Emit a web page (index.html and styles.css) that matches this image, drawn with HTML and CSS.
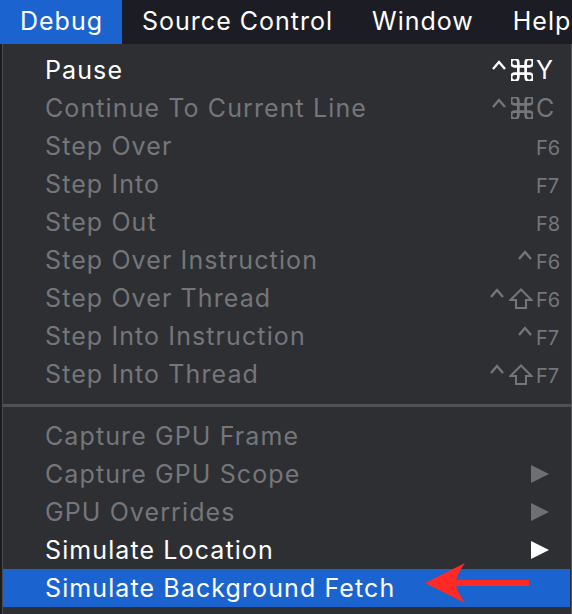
FILE: index.html
```html
<!DOCTYPE html>
<html>
<head>
<meta charset="utf-8">
<link rel="stylesheet" href="styles.css">
</head>
<body>
<div class="menubar">
  <div class="mb-item active">Debug</div>
  <div class="mb-item">Source Control</div>
  <div class="mb-item">Window</div>
  <div class="mb-item">Help</div>
</div>
<div class="menu">
  <div class="row">
    <span class="label">Pause</span>
    <span class="sc"><span class="mods"><svg class="ctrl" viewBox="0 0 16 10"><path d="M2 9 L8 2 L14 9"/></svg><svg class="cmd" viewBox="3 3 18 18"><path d="M15 6v12a3 3 0 1 0 3-3H6a3 3 0 1 0 3 3V6a3 3 0 1 0-3 3h12a3 3 0 1 0-3-3"/></svg></span><span class="key">Y</span></span>
  </div>
  <div class="row dis">
    <span class="label">Continue To Current Line</span>
    <span class="sc"><span class="mods"><svg class="ctrl" viewBox="0 0 16 10"><path d="M2 9 L8 2 L14 9"/></svg><svg class="cmd" viewBox="3 3 18 18"><path d="M15 6v12a3 3 0 1 0 3-3H6a3 3 0 1 0 3 3V6a3 3 0 1 0-3 3h12a3 3 0 1 0-3-3"/></svg></span><span class="key">C</span></span>
  </div>
  <div class="row dis">
    <span class="label">Step Over</span>
    <span class="sc"><span class="mods"></span><span class="key fk">F6</span></span>
  </div>
  <div class="row dis">
    <span class="label">Step Into</span>
    <span class="sc"><span class="mods"></span><span class="key fk">F7</span></span>
  </div>
  <div class="row dis">
    <span class="label">Step Out</span>
    <span class="sc"><span class="mods"></span><span class="key fk">F8</span></span>
  </div>
  <div class="row dis">
    <span class="label">Step Over Instruction</span>
    <span class="sc"><span class="mods"><svg class="ctrl" viewBox="0 0 16 10"><path d="M2 9 L8 2 L14 9"/></svg></span><span class="key fk">F6</span></span>
  </div>
  <div class="row dis">
    <span class="label">Step Over Thread</span>
    <span class="sc"><span class="mods"><svg class="ctrl" viewBox="0 0 16 10"><path d="M2 9 L8 2 L14 9"/></svg><svg class="shift" viewBox="0 0 24 21"><path d="M12 1.5 L1.5 12 H7 V20 H17 V12 H22.5 Z"/></svg></span><span class="key fk">F6</span></span>
  </div>
  <div class="row dis">
    <span class="label">Step Into Instruction</span>
    <span class="sc"><span class="mods"><svg class="ctrl" viewBox="0 0 16 10"><path d="M2 9 L8 2 L14 9"/></svg></span><span class="key fk">F7</span></span>
  </div>
  <div class="row dis">
    <span class="label">Step Into Thread</span>
    <span class="sc"><span class="mods"><svg class="ctrl" viewBox="0 0 16 10"><path d="M2 9 L8 2 L14 9"/></svg><svg class="shift" viewBox="0 0 24 21"><path d="M12 1.5 L1.5 12 H7 V20 H17 V12 H22.5 Z"/></svg></span><span class="key fk">F7</span></span>
  </div>
  <div class="sep"></div>
  <div class="row dis">
    <span class="label">Capture GPU Frame</span>
  </div>
  <div class="row dis">
    <span class="label">Capture GPU Scope</span>
    <svg class="tri" viewBox="0 0 18 18"><path d="M0 0 L18 9 L0 18 Z"/></svg>
  </div>
  <div class="row dis">
    <span class="label">GPU Overrides</span>
    <svg class="tri" viewBox="0 0 18 18"><path d="M0 0 L18 9 L0 18 Z"/></svg>
  </div>
  <div class="row">
    <span class="label">Simulate Location</span>
    <svg class="tri" viewBox="0 0 18 18"><path d="M0 0 L18 9 L0 18 Z"/></svg>
  </div>
  <div class="row sel">
    <span class="label">Simulate Background Fetch</span>
    <svg class="red-arrow" viewBox="0 0 106 44"><path d="M0 20 L40 0 Q33 10 31 17 L104 17 L104 23 L31 23 Q33 30 40 40 Z"/></svg>
  </div>
</div>
</body>
</html>
```
FILE: styles.css
```css
* { box-sizing: border-box; }
html, body { margin: 0; padding: 0; }
body {
  width: 572px;
  height: 614px;
  overflow: hidden;
  background: #1c1d22;
  font-family: Inter, "Noto Sans", sans-serif;
  -webkit-font-smoothing: antialiased;
}
.menubar {
  display: flex;
  height: 44px;
  background: #1c1d24;
  color: #ffffff;
  font-size: 25px;
  letter-spacing: 1px;
  align-items: stretch;
}
.mb-item {
  display: flex;
  align-items: center;
  padding: 0 19px 2px 20px;
  white-space: nowrap;
}
.mb-item.active { background: #1b64d0; }
.menu {
  margin-left: 2px;
  height: 570px;
  background: #2d2f33;
  border-left: 1px solid #4a4b4f;
  border-right: 1px solid #55565a;
  padding-top: 7px;
  color: #ffffff;
  font-size: 25px;
  letter-spacing: 1.1px;
}
.row {
  height: 38px;
  display: flex;
  align-items: center;
  padding-left: 42px;
  position: relative;
}
.row.dis { color: #75767a; }
.row.sel { background: #1b64d0; margin-right: 1px; }
.label { flex: 1; white-space: nowrap; }
.sc { display: flex; align-items: center; width: 150px; }
.mods {
  flex: 1;
  height: 24px;
  display: flex;
  justify-content: flex-end;
  align-items: center;
  gap: 4px;
  padding-right: 3px;
}
.key { width: 35px; font-size: 25px; letter-spacing: 0; }
.key.fk { font-size: 20px; padding-top: 3px; }
.ctrl { width: 16px; height: 10px; fill: none; stroke: currentColor; stroke-width: 2.4; align-self: flex-start; margin-top: 2px; }
.cmd { width: 22px; height: 22px; fill: none; stroke: currentColor; stroke-width: 2.2; }
.shift { width: 24px; height: 21px; fill: none; stroke: currentColor; stroke-width: 2; }
.tri { width: 18px; height: 18px; fill: currentColor; margin-right: 22px; }
.row.dis .tri { fill: #6e6f73; }
.sep {
  height: 24px;
  display: flex;
  align-items: center;
}
.sep::before {
  content: "";
  display: block;
  width: 100%;
  height: 3px;
  background: #505155;
}
.red-arrow {
  position: absolute;
  left: 422px;
  top: -6px;
  width: 106px;
  height: 44px;
  fill: #ff2a26;
}
```
